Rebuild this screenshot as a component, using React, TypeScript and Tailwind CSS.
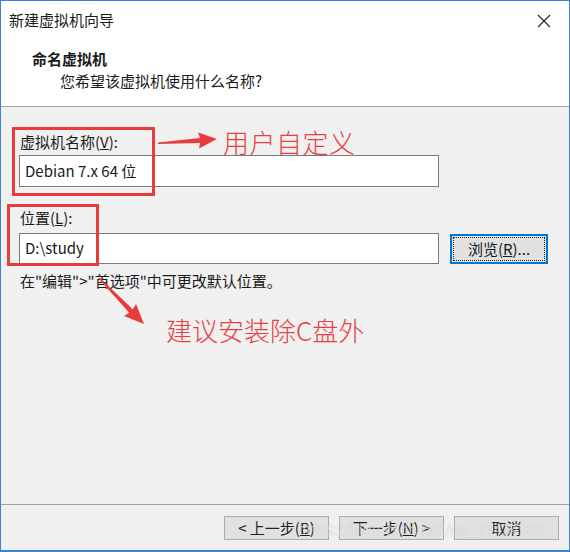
const ui = "font-['Noto_Sans_CJK_SC',sans-serif]"

function WinButton({ children }: { children: React.ReactNode }) {
  return (
    <button className="w-[105px] h-[24px] bg-[#e1e1e1] border border-[#adadad] text-[15px] leading-[20px] text-[#222] flex items-center justify-center">
      {children}
    </button>
  )
}

export default function App() {
  return (
    <div className={`relative w-[570px] h-[552px] bg-white border-x border-t border-b-2 border-[#3c82cf] flex flex-col text-[#1a1a1a] ${ui}`}>
      {/* title bar */}
      <div className="h-[38px] flex items-center justify-between pl-[8px] pr-[18px]">
        <span className="text-[15px] leading-[20px]">新建虚拟机向导</span>
        <svg width="14" height="14" viewBox="0 0 14 14" className="mt-[1px]">
          <path d="M1 1 L13 13 M13 1 L1 13" stroke="#222" strokeWidth="1.1" />
        </svg>
      </div>

      {/* header */}
      <div className="h-[68px] pl-[31px] pt-[10px] border-b border-[#a0a0a0]">
        <div className="text-[15px] leading-[20px] font-bold">命名虚拟机</div>
        <div className="text-[15px] leading-[20px] pl-[28px] mt-[2px]">您希望该虚拟机使用什么名称?</div>
      </div>

      {/* body */}
      <div className="flex-1 bg-[#f0f0f0] pt-[25px] pl-[18px] pr-[19px]">
        <div className="text-[15px] leading-[20px] ml-[1px]">
          虚拟机名称(<span className="underline">V</span>):
        </div>
        <div className="mt-[3px] w-[420px] h-[32px] bg-white border border-[#7a7a7a] flex items-center pl-[5px] text-[15px]">
          Debian 7.x 64 位
        </div>

        <div className="text-[15px] leading-[20px] mt-[21px] ml-[1px]">
          位置(<span className="underline">L</span>):
        </div>
        <div className="mt-[5px] flex items-center gap-[11px]">
          <div className="w-[420px] h-[31px] bg-white border border-[#7a7a7a] flex items-center pl-[5px] text-[15px]">
            D:\study
          </div>
          <button className="w-[98px] h-[30px] bg-[#e1e1e1] border border-[#0078d7] shadow-[inset_0_0_0_1px_#0078d7] p-[2px]">
            <span className="w-full h-full border border-dotted border-[#222] flex items-center justify-center text-[15px] leading-[20px]">
              浏览(<span className="underline">R</span>)...
            </span>
          </button>
        </div>

        <div className="text-[15px] leading-[20px] mt-[7px] ml-[1px]">
          在"编辑"&gt;"首选项"中可更改默认位置。
        </div>
      </div>

      {/* footer */}
      <div className="h-[46px] bg-[#f0f0f0] border-t border-[#a0a0a0] flex justify-end gap-[10px] pt-[11px] pr-[10px]">
        <WinButton>&lt; 上一步(<span className="underline">B</span>)</WinButton>
        <WinButton>下一步(<span className="underline">N</span>) &gt;</WinButton>
        <WinButton>取消</WinButton>
      </div>

      {/* watermark */}
      <div className="absolute left-[296px] top-[518px] text-[15px] leading-[20px] text-white/60 [text-shadow:0_0_1px_rgba(0,0,0,0.2)] pointer-events-none">
        https://blog.csdn.net/qq_37434989
      </div>

      {/* annotations */}
      <div className="absolute left-[11px] top-[126px] w-[143px] h-[69px] border-[3px] border-[#e83b3b] pointer-events-none" />
      <div className="absolute left-[6px] top-[203px] w-[92px] h-[62px] border-[3px] border-[#e83b3b] pointer-events-none" />
      <svg className="absolute left-0 top-0 pointer-events-none" width="570" height="552">
        <polygon points="157,141.5 199,137 197,131.5 216,138 198,147.5 199,142 157,143" fill="#e83b3b" />
        <polygon points="98.5,276.5 131.8,308.3 135,303 143,323 123,315 128.2,311.75 97.5,277.5" fill="#e83b3b" />
      </svg>
      <div className="absolute left-[222px] top-[124px] text-[26px] leading-[34px] text-[#e8403f] font-light tracking-[0.5px] pointer-events-none">
        用户自定义
      </div>
      <div className="absolute left-[165px] top-[312px] text-[26px] leading-[34px] text-[#e8403f] font-light pointer-events-none">
        建议安装除C盘外
      </div>
    </div>
  )
}
